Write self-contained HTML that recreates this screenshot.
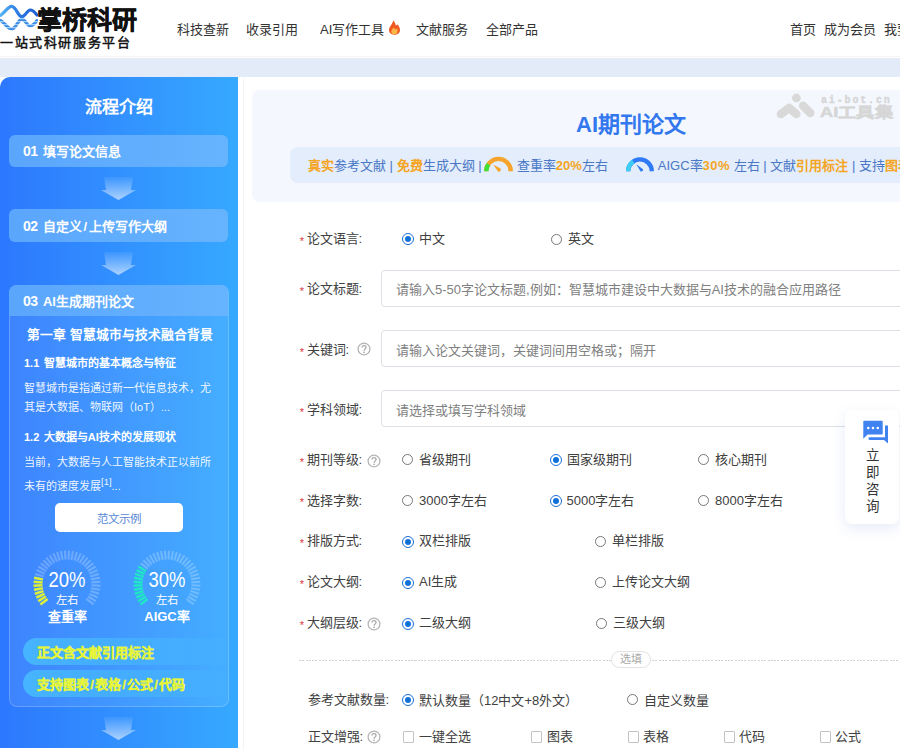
<!DOCTYPE html>
<html lang="zh-CN"><head><meta charset="utf-8">
<style>
*{box-sizing:border-box;margin:0;padding:0}
html,body{width:900px;height:750px;overflow:hidden;background:#fff;font-family:"Liberation Sans",sans-serif;color:#333}
.a{position:absolute;white-space:nowrap}
#hdr{position:absolute;left:0;top:0;width:900px;height:58px;background:#fff}
#band{position:absolute;left:0;top:58px;width:900px;height:19px;background:#e4ebf8}
.nav{font-size:13px;line-height:20px;top:20px;color:#333}
#side{position:absolute;left:0;top:77px;width:238px;height:671px;border-top-left-radius:10px;background:linear-gradient(90deg,#2d78fe 0%,#36a9ff 100%);overflow:hidden}
.step{position:absolute;left:9px;width:219px;height:32px;border-radius:6px;background:linear-gradient(90deg,#5ba6fd,#66b3fe);color:#fff;font-weight:bold;font-size:13px;line-height:33px;padding-left:14px}
.step i{font-style:normal;margin-right:5.5px;font-size:14px;letter-spacing:-0.6px}
.arr{position:absolute;left:101px;width:35px;height:24px}
#main{position:absolute;left:238px;top:77px;width:662px;height:673px;background:#fff}
.lbl{font-size:13px;line-height:20px;color:#404040;margin-top:1px}
.req{color:#d9363e;font-size:11px;margin-right:2.3px;position:relative;top:1.7px;left:-0.3px}
.rad{position:absolute;width:11px;height:11px;margin:0.3px 0 0 0.3px;border-radius:50%;border:1px solid #777;background:#fff}
.rad.on{border-color:#1b6fd6;width:12px;height:12px;margin:0}
.rad.on::after{content:"";position:absolute;left:2px;top:2px;width:6px;height:6px;border-radius:50%;background:#1170d8}
.inp{position:absolute;left:381px;width:600px;height:37px;border:1px solid #dcdfe6;border-radius:4px;background:#fff}
.ph{font-size:13px;line-height:20px;color:#808080;margin-top:1.5px}
.q{position:absolute;width:13px;height:13px;border-radius:50%;border:1px solid #bbb;color:#aaa;font-size:10px;line-height:11px;text-align:center}
.chk{position:absolute;width:11px;height:11.5px;border:1px solid #c2c2c2;border-radius:1px;background:#fff}
</style></head><body>
<div id="hdr">
  <svg class="a" style="left:0;top:0" width="38" height="32" viewBox="0 0 38 32"><defs><linearGradient id="wg" x1="0" x2="1"><stop offset="0" stop-color="#56b4f2"/><stop offset="0.5" stop-color="#2a78e4"/><stop offset="1" stop-color="#1f5fd6"/></linearGradient><pattern id="wp" width="4" height="3" patternUnits="userSpaceOnUse"><rect width="4" height="3" fill="#3f8ae6"/><rect width="4" height="1.2" fill="#9fd2f8"/></pattern></defs>
    <path d="M0.5 15.3 C4.5 13,8 6.4,11.6 6.4 C16 6.4,18 16.7,21.8 16.7 C25.5 16.7,27 10,30.2 10 C33 10,35 12.5,37 15" fill="none" stroke="url(#wg)" stroke-width="3.2" stroke-linecap="round"/>
    <path d="M0.5 20.3 C4.5 22.5,8 29,11.6 29 C16 29,18 19.3,21.8 19.3 C25.5 19.3,27 26,30.2 26 C33 26,35 23.5,37 20.5" fill="none" stroke="url(#wp)" stroke-width="3.2" stroke-linecap="round"/>
  </svg>
  <div class="a" style="left:37px;top:5px;font-size:25px;line-height:30px;font-weight:bold;color:#111;-webkit-text-stroke:0.6px #111">掌桥科研</div>
  <div class="a" style="left:0;top:35px;font-size:13px;line-height:16px;font-weight:normal;-webkit-text-stroke:0.45px #111;color:#111;letter-spacing:1.6px">一站式科研服务平台</div>
  <div class="a nav" style="left:177px">科技查新</div>
  <div class="a nav" style="left:246px">收录引用</div>
  <div class="a nav" style="left:320px">AI写作工具</div>
  <svg class="a" style="left:388px;top:20px" width="13" height="16" viewBox="0 0 13 16"><path d="M6.3 14.8 C2.8 14.8 0.8 12.5 1 9.6 C1.2 6.8 3.8 5 5.4 0.4 C6.8 2.2 7.6 3.8 7.8 5.6 C8.4 5 9 4.6 9.6 4.4 C11.4 6.4 12 8.5 12 10 C12 12.8 9.8 14.8 6.3 14.8 Z" fill="#f05a22"/><path d="M6.3 14.5 C4.3 14.5 3.2 13.2 3.3 11.6 C3.4 10 4.8 9 5.6 7.2 C6.6 8.6 7.3 9 8 9.6 C8.6 8.8 9 8.5 9.2 8.2 C9.8 9.5 9.6 10.5 9.5 11.5 C9.4 13.3 8.2 14.5 6.3 14.5 Z" fill="#fdb54a"/></svg>
  <div class="a nav" style="left:416px">文献服务</div>
  <div class="a nav" style="left:486px">全部产品</div>
  <div class="a nav" style="left:790px">首页</div>
  <div class="a nav" style="left:824px">成为会员</div>
  <div class="a nav" style="left:884px">我要</div>
</div>
<div id="band"></div>
<div class="a" style="left:0;top:56px;width:900px;height:1px;background:#f5f5f5"></div>

<div id="side">
  <div class="a" style="left:0;width:238px;text-align:center;top:19px;font-size:17px;line-height:24px;font-weight:bold;color:#fff">流程介绍</div>
  <div class="step" style="top:58px"><i>01</i>填写论文信息</div>
  <svg class="arr" style="top:100px" viewBox="0 0 35 24"><defs><linearGradient id="ag" x1="0" y1="0" x2="0" y2="1"><stop offset="0" stop-color="#fff" stop-opacity="0.05"/><stop offset="1" stop-color="#fff" stop-opacity="0.6"/></linearGradient></defs><path d="M3 0 H32 L30 13 H35 L17.5 23 L0 13 H5 Z" fill="url(#ag)"/></svg>
  <div class="step" style="top:132px;height:32.5px;line-height:35px"><i>02</i>自定义<span style="margin:0 1.5px">/</span>上传写作大纲</div>
  <svg class="arr" style="top:175px" viewBox="0 0 35 24"><path d="M3 0 H32 L30 13 H35 L17.5 23 L0 13 H5 Z" fill="url(#ag)"/></svg>
  <div class="a" style="left:9px;top:208px;width:220px;height:422px;border-radius:8px;border:1px solid rgba(255,255,255,0.2);background:rgba(255,255,255,0.08)"></div>
  <div class="step" style="top:208px;height:31px;border-radius:8px 8px 0 0;line-height:33px"><i>03</i>AI生成期刊论文</div>
  <div class="a" style="left:27px;top:249px;font-size:12.8px;line-height:18px;font-weight:bold;color:#fff">第一章 智慧城市与技术融合背景</div>
  <div class="a" style="left:24px;top:278px;font-size:11px;line-height:16px;font-weight:bold;color:#fff;word-spacing:1.5px">1.1 智慧城市的基本概念与特征</div>
  <div class="a" style="left:24px;top:302px;width:195px;white-space:normal;font-size:11px;line-height:19px;color:rgba(255,255,255,0.93)">智慧城市是指通过新一代信息技术，尤其是大数据、物联网（IoT）...</div>
  <div class="a" style="left:24px;top:352px;font-size:11px;line-height:16px;font-weight:bold;color:#fff;word-spacing:1.5px">1.2 大数据与AI技术的发展现状</div>
  <div class="a" style="left:24px;top:376px;width:195px;white-space:normal;font-size:11px;line-height:19px;color:rgba(255,255,255,0.93)">当前，大数据与人工智能技术正以前所未有的速度发展<sup style="font-size:9.5px">[1]</sup>...</div>
  <div class="a" style="left:55px;top:426px;width:128px;height:29px;border-radius:5px;background:#fff;text-align:center;font-size:11.5px;line-height:32px;color:#5686d4">范文示例</div>
  <svg class="a" style="left:31px;top:471px" width="72" height="72" viewBox="0 0 72 72"><g stroke-width="2.1"><line x1="16.6" y1="50.9" x2="9.4" y2="56.4" stroke="#dcf03a" stroke-width="2.5"/><line x1="14.9" y1="48.5" x2="7.2" y2="53.1" stroke="#dcf03a" stroke-width="2.5"/><line x1="13.6" y1="45.9" x2="5.3" y2="49.5" stroke="#dcf03a" stroke-width="2.5"/><line x1="12.5" y1="43.1" x2="3.9" y2="45.7" stroke="#dcf03a" stroke-width="2.5"/><line x1="11.9" y1="40.2" x2="3.0" y2="41.8" stroke="#dcf03a" stroke-width="2.5"/><line x1="11.5" y1="37.3" x2="2.5" y2="37.8" stroke="#dcf03a" stroke-width="2.5"/><line x1="11.6" y1="34.4" x2="2.6" y2="33.7" stroke="#dcf03a" stroke-width="2.5"/><line x1="11.9" y1="31.4" x2="3.1" y2="29.8" stroke="#dcf03a" stroke-width="2.5"/><line x1="12.7" y1="28.6" x2="4.1" y2="25.9" stroke="rgba(255,255,255,0.24)"/><line x1="13.7" y1="25.8" x2="5.5" y2="22.1" stroke="rgba(255,255,255,0.24)"/><line x1="15.1" y1="23.2" x2="7.4" y2="18.5" stroke="rgba(255,255,255,0.24)"/><line x1="16.8" y1="20.8" x2="9.7" y2="15.2" stroke="rgba(255,255,255,0.24)"/><line x1="18.7" y1="18.6" x2="12.4" y2="12.2" stroke="rgba(255,255,255,0.24)"/><line x1="20.9" y1="16.7" x2="15.4" y2="9.6" stroke="rgba(255,255,255,0.24)"/><line x1="23.4" y1="15.0" x2="18.7" y2="7.3" stroke="rgba(255,255,255,0.24)"/><line x1="26.0" y1="13.6" x2="22.3" y2="5.4" stroke="rgba(255,255,255,0.24)"/><line x1="28.7" y1="12.6" x2="26.1" y2="4.0" stroke="rgba(255,255,255,0.24)"/><line x1="31.6" y1="11.9" x2="30.0" y2="3.0" stroke="rgba(255,255,255,0.24)"/><line x1="34.5" y1="11.5" x2="34.0" y2="2.6" stroke="rgba(255,255,255,0.24)"/><line x1="37.5" y1="11.5" x2="38.0" y2="2.6" stroke="rgba(255,255,255,0.24)"/><line x1="40.4" y1="11.9" x2="42.0" y2="3.0" stroke="rgba(255,255,255,0.24)"/><line x1="43.3" y1="12.6" x2="45.9" y2="4.0" stroke="rgba(255,255,255,0.24)"/><line x1="46.0" y1="13.6" x2="49.7" y2="5.4" stroke="rgba(255,255,255,0.24)"/><line x1="48.6" y1="15.0" x2="53.3" y2="7.3" stroke="rgba(255,255,255,0.24)"/><line x1="51.1" y1="16.7" x2="56.6" y2="9.6" stroke="rgba(255,255,255,0.24)"/><line x1="53.3" y1="18.6" x2="59.6" y2="12.2" stroke="rgba(255,255,255,0.24)"/><line x1="55.2" y1="20.8" x2="62.3" y2="15.2" stroke="rgba(255,255,255,0.24)"/><line x1="56.9" y1="23.2" x2="64.6" y2="18.5" stroke="rgba(255,255,255,0.24)"/><line x1="58.3" y1="25.8" x2="66.5" y2="22.1" stroke="rgba(255,255,255,0.24)"/><line x1="59.3" y1="28.6" x2="67.9" y2="25.9" stroke="rgba(255,255,255,0.24)"/><line x1="60.1" y1="31.4" x2="68.9" y2="29.8" stroke="rgba(255,255,255,0.24)"/><line x1="60.4" y1="34.4" x2="69.4" y2="33.7" stroke="rgba(255,255,255,0.24)"/><line x1="60.5" y1="37.3" x2="69.5" y2="37.8" stroke="rgba(255,255,255,0.24)"/><line x1="60.1" y1="40.2" x2="69.0" y2="41.8" stroke="rgba(255,255,255,0.24)"/><line x1="59.5" y1="43.1" x2="68.1" y2="45.7" stroke="rgba(255,255,255,0.24)"/><line x1="58.4" y1="45.9" x2="66.7" y2="49.5" stroke="rgba(255,255,255,0.24)"/><line x1="57.1" y1="48.5" x2="64.8" y2="53.1" stroke="rgba(255,255,255,0.24)"/><line x1="55.4" y1="50.9" x2="62.6" y2="56.4" stroke="rgba(255,255,255,0.24)"/></g></svg>
  <div class="a" style="left:31px;top:491px;width:72px;text-align:center;font-size:22px;line-height:24px;color:#fff;transform:scaleX(0.84)">20%</div>
  <div class="a" style="left:31px;top:516px;width:72px;text-align:center;font-size:11.5px;line-height:14px;color:#fff">左右</div>
  <div class="a" style="left:31px;top:532px;width:72px;text-align:center;font-size:13px;line-height:16px;font-weight:bold;color:#fff">查重率</div>
  <svg class="a" style="left:131px;top:471px" width="72" height="72" viewBox="0 0 72 72"><g stroke-width="2.1"><line x1="16.6" y1="50.9" x2="9.4" y2="56.4" stroke="#20e5c6" stroke-width="2.5"/><line x1="14.9" y1="48.5" x2="7.2" y2="53.1" stroke="#20e5c6" stroke-width="2.5"/><line x1="13.6" y1="45.9" x2="5.3" y2="49.5" stroke="#20e5c6" stroke-width="2.5"/><line x1="12.5" y1="43.1" x2="3.9" y2="45.7" stroke="#20e5c6" stroke-width="2.5"/><line x1="11.9" y1="40.2" x2="3.0" y2="41.8" stroke="#20e5c6" stroke-width="2.5"/><line x1="11.5" y1="37.3" x2="2.5" y2="37.8" stroke="#20e5c6" stroke-width="2.5"/><line x1="11.6" y1="34.4" x2="2.6" y2="33.7" stroke="#20e5c6" stroke-width="2.5"/><line x1="11.9" y1="31.4" x2="3.1" y2="29.8" stroke="#20e5c6" stroke-width="2.5"/><line x1="12.7" y1="28.6" x2="4.1" y2="25.9" stroke="#20e5c6" stroke-width="2.5"/><line x1="13.7" y1="25.8" x2="5.5" y2="22.1" stroke="#20e5c6" stroke-width="2.5"/><line x1="15.1" y1="23.2" x2="7.4" y2="18.5" stroke="#20e5c6" stroke-width="2.5"/><line x1="16.8" y1="20.8" x2="9.7" y2="15.2" stroke="rgba(255,255,255,0.24)"/><line x1="18.7" y1="18.6" x2="12.4" y2="12.2" stroke="rgba(255,255,255,0.24)"/><line x1="20.9" y1="16.7" x2="15.4" y2="9.6" stroke="rgba(255,255,255,0.24)"/><line x1="23.4" y1="15.0" x2="18.7" y2="7.3" stroke="rgba(255,255,255,0.24)"/><line x1="26.0" y1="13.6" x2="22.3" y2="5.4" stroke="rgba(255,255,255,0.24)"/><line x1="28.7" y1="12.6" x2="26.1" y2="4.0" stroke="rgba(255,255,255,0.24)"/><line x1="31.6" y1="11.9" x2="30.0" y2="3.0" stroke="rgba(255,255,255,0.24)"/><line x1="34.5" y1="11.5" x2="34.0" y2="2.6" stroke="rgba(255,255,255,0.24)"/><line x1="37.5" y1="11.5" x2="38.0" y2="2.6" stroke="rgba(255,255,255,0.24)"/><line x1="40.4" y1="11.9" x2="42.0" y2="3.0" stroke="rgba(255,255,255,0.24)"/><line x1="43.3" y1="12.6" x2="45.9" y2="4.0" stroke="rgba(255,255,255,0.24)"/><line x1="46.0" y1="13.6" x2="49.7" y2="5.4" stroke="rgba(255,255,255,0.24)"/><line x1="48.6" y1="15.0" x2="53.3" y2="7.3" stroke="rgba(255,255,255,0.24)"/><line x1="51.1" y1="16.7" x2="56.6" y2="9.6" stroke="rgba(255,255,255,0.24)"/><line x1="53.3" y1="18.6" x2="59.6" y2="12.2" stroke="rgba(255,255,255,0.24)"/><line x1="55.2" y1="20.8" x2="62.3" y2="15.2" stroke="rgba(255,255,255,0.24)"/><line x1="56.9" y1="23.2" x2="64.6" y2="18.5" stroke="rgba(255,255,255,0.24)"/><line x1="58.3" y1="25.8" x2="66.5" y2="22.1" stroke="rgba(255,255,255,0.24)"/><line x1="59.3" y1="28.6" x2="67.9" y2="25.9" stroke="rgba(255,255,255,0.24)"/><line x1="60.1" y1="31.4" x2="68.9" y2="29.8" stroke="rgba(255,255,255,0.24)"/><line x1="60.4" y1="34.4" x2="69.4" y2="33.7" stroke="rgba(255,255,255,0.24)"/><line x1="60.5" y1="37.3" x2="69.5" y2="37.8" stroke="rgba(255,255,255,0.24)"/><line x1="60.1" y1="40.2" x2="69.0" y2="41.8" stroke="rgba(255,255,255,0.24)"/><line x1="59.5" y1="43.1" x2="68.1" y2="45.7" stroke="rgba(255,255,255,0.24)"/><line x1="58.4" y1="45.9" x2="66.7" y2="49.5" stroke="rgba(255,255,255,0.24)"/><line x1="57.1" y1="48.5" x2="64.8" y2="53.1" stroke="rgba(255,255,255,0.24)"/><line x1="55.4" y1="50.9" x2="62.6" y2="56.4" stroke="rgba(255,255,255,0.24)"/></g></svg>
  <div class="a" style="left:131px;top:491px;width:72px;text-align:center;font-size:22px;line-height:24px;color:#fff;transform:scaleX(0.84)">30%</div>
  <div class="a" style="left:131px;top:516px;width:72px;text-align:center;font-size:11.5px;line-height:14px;color:#fff">左右</div>
  <div class="a" style="left:131px;top:532px;width:72px;text-align:center;font-size:13px;line-height:16px;font-weight:bold;color:#fff">AIGC率</div>
  <div class="a" style="left:23px;top:561px;width:205px;height:27px;border-radius:14px 0 0 14px;background:linear-gradient(90deg,rgba(72,192,255,0.8),rgba(72,192,255,0.35) 75%,rgba(72,192,255,0.05));font-size:13px;line-height:30px;font-weight:bold;color:#e6f53a;-webkit-text-stroke:0.35px #e6f53a;padding-left:14px">正文含文献引用标注</div>
  <div class="a" style="left:23px;top:592.5px;width:205px;height:27px;border-radius:14px 0 0 14px;background:linear-gradient(90deg,rgba(72,192,255,0.8),rgba(72,192,255,0.35) 75%,rgba(72,192,255,0.05));font-size:13px;line-height:30px;font-weight:bold;color:#e6f53a;-webkit-text-stroke:0.35px #e6f53a;padding-left:14px">支持图表<span style="margin:0 1.2px">/</span>表格<span style="margin:0 1.2px">/</span>公式<span style="margin:0 1.2px">/</span>代码</div>
  <svg class="arr" style="top:640px" viewBox="0 0 35 24"><path d="M3 0 H32 L30 13 H35 L17.5 23 L0 13 H5 Z" fill="url(#ag)"/></svg>
</div>

<div id="main">
  <div class="a" style="left:5px;top:0;width:1px;height:673px;background:#f4f4f4"></div>
  <div class="a" style="left:14px;top:13px;width:700px;height:112px;border-radius:8px;background:#f4f8fe"></div>
  <div class="a" style="left:338px;top:35px;font-size:22px;line-height:26px;font-weight:bold;color:#3377ee">AI期刊论文</div>
  <div class="a" style="left:52px;top:70px;width:700px;height:36px;border-radius:8px;background:#e3edfb"></div>
  <div class="a" style="left:70px;top:78.7px;font-size:13px;line-height:20px;color:#4a78c6">
    <b style="color:#f5a524">真实</b>参考文献 | <b style="color:#f5a524">免费</b>生成大纲 | <span style="display:inline-block;width:28px"></span> 查重率<b style="color:#f5a524">20%</b>左右 <span style="display:inline-block;width:46.3px"></span>AIGC率<b style="color:#f5a524;letter-spacing:0.5px">30%</b> 左右 | 文献<b style="color:#f5a524">引用标注</b> | 支持<b style="color:#f5a524">图表</b>
  </div>
</div>

<svg class="a" style="left:484px;top:156px" width="30" height="16" viewBox="0 0 30 16"><path d="M2.2 15.2 A12.3 12.3 0 0 1 26.8 15.2" fill="none" stroke="#f6a42c" stroke-width="4.4"/><path d="M2.2 15.2 A12.3 12.3 0 0 1 4.43 8.15" fill="none" stroke="#3ee03a" stroke-width="4.4"/><path d="M9.3 8.6 L16.4 12.6 A1.9 1.9 0 0 1 14 15.4 Z" fill="#f6a42c"/></svg>
<svg class="a" style="left:626px;top:157px" width="29" height="15" viewBox="0 0 29 15"><path d="M2.2 14.2 A11.8 11.8 0 0 1 25.8 14.2" fill="none" stroke="#2f7af6" stroke-width="4.3"/><path d="M2.2 14.2 A11.8 11.8 0 0 1 7.23 4.53" fill="none" stroke="#3ccff3" stroke-width="4.3"/><path d="M10.3 7.2 L17 12.2 A1.8 1.8 0 0 1 14.6 14.4 Z" fill="#2f7af6"/></svg>
<!-- form -->
<div class="a lbl" style="left:300px;top:228px"><span class="req">*</span>论文语言:</div>
<div class="rad on" style="left:402px;top:233px"></div><div class="a lbl" style="left:419px;top:228px">中文</div>
<div class="rad" style="left:551px;top:233.5px"></div><div class="a lbl" style="left:568px;top:228px">英文</div>

<div class="a lbl" style="left:300px;top:278px"><span class="req">*</span>论文标题:</div>
<div class="inp" style="top:270px"></div><div class="a ph" style="left:396px;top:278px">请输入5-50字论文标题,例如：智慧城市建设中大数据与AI技术的融合应用路径</div>

<div class="a lbl" style="left:300px;top:339px"><span class="req">*</span>关键词:</div>
<svg class="a" style="left:357.2px;top:342.3px" width="14" height="14" viewBox="0 0 14 14"><circle cx="7" cy="7" r="5.9" fill="none" stroke="#b4b4b4" stroke-width="1.25"/><path d="M5 5.6 Q5 3.7 7 3.7 Q9 3.7 9 5.4 Q9 6.4 8 7 Q7.1 7.5 7.1 8.7" fill="none" stroke="#aaa" stroke-width="1.3"/><circle cx="7.1" cy="10.3" r="0.85" fill="#aaa"/></svg>
<div class="inp" style="top:330px"></div><div class="a ph" style="left:396px;top:339px">请输入论文关键词，关键词间用空格或；隔开</div>

<div class="a lbl" style="left:300px;top:399px"><span class="req">*</span>学科领域:</div>
<div class="inp" style="top:390px"></div><div class="a ph" style="left:396px;top:399px">请选择或填写学科领域</div>

<div class="a lbl" style="left:300px;top:449px"><span class="req">*</span>期刊等级:</div>
<svg class="a" style="left:366.6px;top:453.8px" width="14" height="14" viewBox="0 0 14 14"><circle cx="7" cy="7" r="5.9" fill="none" stroke="#b4b4b4" stroke-width="1.25"/><path d="M5 5.6 Q5 3.7 7 3.7 Q9 3.7 9 5.4 Q9 6.4 8 7 Q7.1 7.5 7.1 8.7" fill="none" stroke="#aaa" stroke-width="1.3"/><circle cx="7.1" cy="10.3" r="0.85" fill="#aaa"/></svg>
<div class="rad" style="left:402px;top:454px"></div><div class="a lbl" style="left:419px;top:449px">省级期刊</div>
<div class="rad on" style="left:550px;top:454px"></div><div class="a lbl" style="left:566.5px;top:449px">国家级期刊</div>
<div class="rad" style="left:698px;top:454px"></div><div class="a lbl" style="left:715px;top:449px">核心期刊</div>

<div class="a lbl" style="left:300px;top:489.5px"><span class="req">*</span>选择字数:</div>
<div class="rad" style="left:402px;top:495px"></div><div class="a lbl" style="left:419px;top:489.5px">3000字左右</div>
<div class="rad on" style="left:550px;top:495px"></div><div class="a lbl" style="left:566.5px;top:489.5px">5000字左右</div>
<div class="rad" style="left:698px;top:495px"></div><div class="a lbl" style="left:715px;top:489.5px">8000字左右</div>

<div class="a lbl" style="left:300px;top:530px"><span class="req">*</span>排版方式:</div>
<div class="rad on" style="left:402px;top:536px"></div><div class="a lbl" style="left:419px;top:530px">双栏排版</div>
<div class="rad" style="left:595px;top:536px"></div><div class="a lbl" style="left:612px;top:530px">单栏排版</div>

<div class="a lbl" style="left:300px;top:571px"><span class="req">*</span>论文大纲:</div>
<div class="rad on" style="left:402px;top:577px"></div><div class="a lbl" style="left:419px;top:571px">AI生成</div>
<div class="rad" style="left:595px;top:577px"></div><div class="a lbl" style="left:612px;top:571px">上传论文大纲</div>

<div class="a lbl" style="left:300px;top:612px"><span class="req">*</span>大纲层级:</div>
<svg class="a" style="left:366.6px;top:617px" width="14" height="14" viewBox="0 0 14 14"><circle cx="7" cy="7" r="5.9" fill="none" stroke="#b4b4b4" stroke-width="1.25"/><path d="M5 5.6 Q5 3.7 7 3.7 Q9 3.7 9 5.4 Q9 6.4 8 7 Q7.1 7.5 7.1 8.7" fill="none" stroke="#aaa" stroke-width="1.3"/><circle cx="7.1" cy="10.3" r="0.85" fill="#aaa"/></svg>
<div class="rad on" style="left:402px;top:618px"></div><div class="a lbl" style="left:419px;top:612px">二级大纲</div>
<div class="rad" style="left:596px;top:618px"></div><div class="a lbl" style="left:613px;top:612px">三级大纲</div>

<div class="a" style="left:299px;top:659.5px;width:610px;height:1.2px;background:repeating-linear-gradient(90deg,#d0d0d0 0 2px,transparent 2px 3.3px)"></div>
<div class="a" style="left:611px;top:651px;width:40px;height:17px;border:1px solid #e2e2e2;border-radius:9px;background:#fff;font-size:11px;line-height:15px;text-align:center;color:#aaa">选填</div>

<div class="a lbl" style="left:307.5px;top:689px">参考文献数量:</div>
<div class="rad on" style="left:402px;top:694px"></div><div class="a lbl" style="left:419px;top:690px">默认数量（12中文+8外文）</div>
<div class="rad" style="left:627px;top:694px"></div><div class="a lbl" style="left:644px;top:690px">自定义数量</div>

<div class="a lbl" style="left:307.5px;top:725.8px">正文增强:</div>
<svg class="a" style="left:367px;top:729.7px" width="14" height="14" viewBox="0 0 14 14"><circle cx="7" cy="7" r="5.9" fill="none" stroke="#b4b4b4" stroke-width="1.25"/><path d="M5 5.6 Q5 3.7 7 3.7 Q9 3.7 9 5.4 Q9 6.4 8 7 Q7.1 7.5 7.1 8.7" fill="none" stroke="#aaa" stroke-width="1.3"/><circle cx="7.1" cy="10.3" r="0.85" fill="#aaa"/></svg>
<div class="chk" style="left:403px;top:731px"></div><div class="a lbl" style="left:419px;top:725.8px">一键全选</div>
<div class="chk" style="left:531px;top:731px"></div><div class="a lbl" style="left:547px;top:725.8px">图表</div>
<div class="chk" style="left:628px;top:731px"></div><div class="a lbl" style="left:643px;top:725.8px">表格</div>
<div class="chk" style="left:724px;top:731px"></div><div class="a lbl" style="left:739px;top:725.8px">代码</div>
<div class="chk" style="left:820px;top:731px"></div><div class="a lbl" style="left:835px;top:725.8px">公式</div>

<!-- consult widget -->
<div class="a" style="left:845px;top:410px;width:54px;height:114px;border-radius:8px;background:#fff;box-shadow:0 5px 14px rgba(70,110,210,0.13)"></div>
<svg class="a" style="left:863px;top:420px" width="26" height="25" viewBox="0 0 26 25"><path d="M0.3 1.6 Q0.3 0.7 1.2 0.7 H18.8 Q19.7 0.7 19.7 1.6 V13.5 Q19.7 14.4 18.8 14.4 H4.6 L0.3 18.8 Z" fill="#3f82f0"/><circle cx="5.3" cy="8" r="1.3" fill="#fff"/><circle cx="10" cy="8" r="1.3" fill="#fff"/><circle cx="14.8" cy="8" r="1.3" fill="#fff"/><path d="M22 5.4 H25 V23.6 L21 19.9 H6.8 Q5.4 19.9 5.4 18.55 Q5.4 17.2 6.8 17.2 H22 Z" fill="#3f82f0"/></svg>
<div class="a" style="left:866px;top:446.5px;width:14px;font-size:13.5px;line-height:17.2px;white-space:normal;color:#333">立即咨询</div>

<!-- watermark -->
<svg class="a" style="left:772px;top:88px" width="50" height="34" viewBox="0 0 50 34"><circle cx="24.4" cy="10" r="4.4" fill="#d9d9d9"/><path d="M8.9 26.1 L17.2 19.8 L24.4 26.1" stroke="#d9d9d9" stroke-width="8.4" fill="none" stroke-linecap="round" stroke-linejoin="round"/><path d="M31.1 17.8 L38.3 25" stroke="#d9d9d9" stroke-width="8.4" stroke-linecap="round"/></svg>
<div class="a" style="left:821px;top:96px;font-family:'Liberation Mono',monospace;font-weight:bold;font-size:10px;line-height:10px;color:#d6d6d6;-webkit-text-stroke:0.4px #d6d6d6;letter-spacing:1.85px">ai-bot.cn</div>
<div class="a" style="left:820px;top:104px;font-size:14px;line-height:17px;font-weight:bold;color:#d6d6d6;-webkit-text-stroke:0.5px #d6d6d6;transform:scaleX(1.3);transform-origin:0 0">AI工具集</div>
</body></html>
